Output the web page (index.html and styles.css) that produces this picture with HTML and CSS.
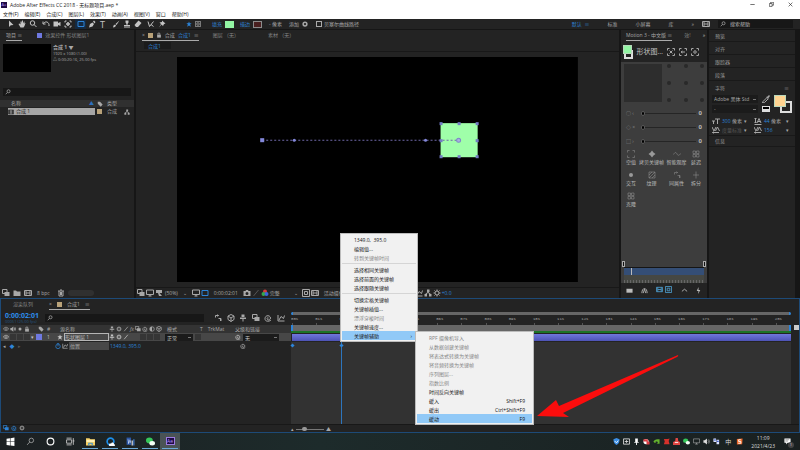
FILE: index.html
```html
<!DOCTYPE html>
<html lang="zh-CN">
<head>
  <meta charset="UTF-8" />
  <meta name="viewport" content="width=device-width, initial-scale=1.0"/>
  <title>Adobe After Effects CC 2018 - 无标题项目.aep *</title>
  <link rel="stylesheet" href="styles.css">
</head>
<body>
<svg class="sprite" aria-hidden="true">
  <symbol id="select" viewBox="0 0 16 16"><path class="f" d="M4 1v13l3.500-3.500L13 10z"/></symbol>
  <symbol id="hand" viewBox="0 0 16 16"><path class="f" d="M5 15L1 8l2-1 2 2V3h2v4l1-6h2v6l2-4h1v5l1-2h1l-2 6-2 3z"/></symbol>
  <symbol id="search" viewBox="0 0 16 16"><circle cx="9.500" cy="6" r="4"/><path d="M6.500 9L2 14"/></symbol>
  <symbol id="zoom" viewBox="0 0 16 16"><circle cx="7" cy="6" r="4.500"/><path d="M10 9l5 5"/></symbol>
  <symbol id="rotate" viewBox="0 0 16 16"><path d="M2 3v5h5M3 7c4-6 12-3 11 5"/></symbol>
  <symbol id="camera" viewBox="0 0 16 16"><path class="f" d="M1 3h9v3l5-2v8l-5-2v3H1z"/></symbol>
  <symbol id="anchor" viewBox="0 0 16 16"><path d="M2 5V2h3M11 2h3v3M14 11v3h-3M5 14H2v-3M8 4v8M4 8h8"/><circle cx="8" cy="8" r="2.500"/></symbol>
  <symbol id="rect" viewBox="0 0 16 16"><path d="M2 3h12v10H2z"/></symbol>
  <symbol id="pen" viewBox="0 0 16 16"><path class="f" d="M2 15l2-7 5-3 3 3-3 5zM10 3l2-2 3 3-2 3z"/></symbol>
  <symbol id="brush" viewBox="0 0 16 16"><path class="f" d="M15 1L7 8l2 2zM6 9l-3 2-1 4 4-1 2-3z"/></symbol>
  <symbol id="stamp" viewBox="0 0 16 16"><path class="f" d="M5 1h6v4L9 8v2h5v3H2v-3h5V8L5 5zM2 14h12v1H2z"/></symbol>
  <symbol id="eraser" viewBox="0 0 16 16"><path class="f" d="M9 1l6 5-7 8H4l-3-4z"/></symbol>
  <symbol id="roto" viewBox="0 0 16 16"><path d="M2 3l3 10 8-10M8 9l5 4"/></symbol>
  <symbol id="pin" viewBox="0 0 16 16"><path class="f" d="M8 1l7 6-3 1-2 4-3-3-5 6 4-7-3-3 5-1z"/></symbol>
  <symbol id="star" viewBox="0 0 16 16"><path class="f" d="M8 1l2 5h5l-4 3 2 6-5-3-5 3 2-6-4-3h5z"/></symbol>
  <symbol id="mask" viewBox="0 0 16 16"><path d="M1 1h14v14H1zM5 5h6v6H5z"/></symbol>
  <symbol id="lock" viewBox="0 0 16 16"><path class="f" d="M3 7h10v8H3z"/><path d="M5 7V3h5v4"/></symbol>
  <symbol id="tag" viewBox="0 0 16 16"><path class="f" d="M2 2h6l7 7-5 6-8-8z"/></symbol>
  <symbol id="tree" viewBox="0 0 16 16"><path class="f" d="M6 1h5v5H6zM1 10h5v5H1zM10 10h5v5h-5z"/><path d="M8 5v3M3 10l5-3 5 3"/></symbol>
  <symbol id="comp" viewBox="0 0 16 16"><path d="M1 3h14v10H1zM4 3v10M12 3v10M4 8h8"/></symbol>
  <symbol id="folder" viewBox="0 0 16 16"><path class="f" d="M1 3h5l2 2h7v9H1z"/></symbol>
  <symbol id="trash" viewBox="0 0 16 16"><path d="M2 4h12M6 2h4M4 4v10h8V4M7 6v6M9 6v6"/></symbol>
  <symbol id="monitor" viewBox="0 0 16 16"><path d="M1 2h14v9H1zM8 11v3M5 14h6"/></symbol>
  <symbol id="layers" viewBox="0 0 16 16"><path d="M1 1h9v8H1z"/><path class="f" d="M5 6h10v8H5z"/></symbol>
  <symbol id="goggles" viewBox="0 0 16 16"><path class="f" d="M2 2h12v6H9l5 6H8L6 8H2z"/></symbol>
  <symbol id="photo" viewBox="0 0 16 16"><path class="f" fill-rule="evenodd" d="M1 4h4l1-2h4l1 2h4v10H1zM8 6a3 3 0 100 6 3 3 0 000-6"/></symbol>
  <symbol id="eye" viewBox="0 0 16 16"><path d="M1 8c4-6 10-6 14 0-4 5-10 5-14 0z"/><circle class="f" cx="8" cy="8" r="2"/></symbol>
  <symbol id="speaker" viewBox="0 0 16 16"><path class="f" d="M1 5h3l5-4v14l-5-4H1z"/><path d="M11 5q3 3 0 6M13 3q4 5 0 10"/></symbol>
  <symbol id="dot" viewBox="0 0 16 16"><circle class="f" cx="8" cy="8" r="4"/></symbol>
  <symbol id="ring" viewBox="0 0 16 16"><circle cx="8" cy="8" r="5" stroke-width="4"/></symbol>
  <symbol id="gear" viewBox="0 0 16 16"><circle cx="8" cy="8" r="4"/><path d="M8 1v3M8 12v3M1 8h3M12 8h3M3 3l2 2M11 11l2 2M13 3l-2 2M5 11l-2 2"/></symbol>
  <symbol id="spiral" viewBox="0 0 16 16"><path d="M9 8c-2-2-4 1-2 3s6 0 6-3-4-6-8-4-4 9 0 10 7 0 9-2"/></symbol>
  <symbol id="slash" viewBox="0 0 16 16"><path d="M3 14L13 2"/></symbol>
  <symbol id="cube" viewBox="0 0 16 16"><path d="M8 1l6 3v7l-6 4-6-4V4zM2 4l6 4 6-4M8 8v7"/></symbol>
  <symbol id="blend" viewBox="0 0 16 16"><circle cx="8" cy="8" r="6"/><path class="f" d="M8 2a6 6 0 000 12z"/></symbol>
  <symbol id="shy" viewBox="0 0 16 16"><path class="f" d="M2 7h12v3H9v5H7v-5H2zM5 1h6v5H5z"/></symbol>
  <symbol id="graph" viewBox="0 0 16 16"><path d="M2 2v12h13M4 12l4-7 5 4 2-6"/></symbol>
  <symbol id="watch" viewBox="0 0 16 16"><circle cx="8" cy="9" r="6"/><path d="M8 9V5M5 1h6"/></symbol>
  <symbol id="drop" viewBox="0 0 16 16"><path d="M10 5l-8 8-1 3 4-1 7-7"/><path class="f" d="M8 4l3-1 3-3 2 2-3 4v3z"/></symbol>
  <symbol id="frame" viewBox="0 0 16 16"><path d="M1 5V1h4M11 1h4v4M15 11v4h-4M5 15H1v-4"/></symbol>
  <symbol id="frame-x" viewBox="0 0 16 16"><path d="M1 5V1h4M11 1h4v4M15 11v4h-4M5 15H1v-4M5 5l6 6M11 5l-6 6"/></symbol>
  <symbol id="frame-l" viewBox="0 0 16 16"><path d="M1 5V1h4M11 1h4v4M15 11v4h-4M5 15H1v-4M12 8H4M7 6L4 8l3 2"/></symbol>
  <symbol id="frame-o" viewBox="0 0 16 16"><path d="M1 5V1h4M11 1h4v4M15 11v4h-4M5 15H1v-4"/><circle cx="8" cy="8" r="2.500"/></symbol>
  <symbol id="clover" viewBox="0 0 16 16"><path class="f" d="M8 1l3 4 4 3-4 3-3 4-3-4-4-3 4-3z"/></symbol>
  <symbol id="wave" viewBox="0 0 16 16"><path d="M1 9c4-7 6-3 7-1s4 5 7-1"/></symbol>
  <symbol id="four" viewBox="0 0 16 16"><path d="M2 2h5v5H2zM9 2h5v5H9zM2 9h5v5H2zM9 9h5v5H9z"/></symbol>
  <symbol id="arrows" viewBox="0 0 16 16"><path d="M3 7V3h6M7 1l2 2-2 2M13 9v5M9 9h5v5"/></symbol>
  <symbol id="plus" viewBox="0 0 16 16"><path d="M8 1v14M2 8h12"/></symbol>
  <symbol id="hatch" viewBox="0 0 16 16"><path d="M2 2h12v12H2zM2 8l6-6M2 14L14 2M8 14l6-6"/></symbol>
  <symbol id="up" viewBox="0 0 16 16"><path d="M2 10l6-5 6 5"/></symbol>
  <symbol id="arch" viewBox="0 0 16 16"><path d="M2 14C2 0 14 0 14 14M5 14l3-9 3 9"/></symbol>
  <symbol id="bolt" viewBox="0 0 16 16"><path class="f" d="M8 0L4 9h4l-1 7 5-9H8z"/></symbol>
  <symbol id="bag" viewBox="0 0 16 16"><path class="f" d="M1 4h14v9H1z"/></symbol>
  <symbol id="tall" viewBox="0 0 16 16"><path class="f" d="M6 3h10v2h-4v9h-2V5H6zM0 7h6v2H4v5H2V9H0z"/></symbol>
  <symbol id="lead" viewBox="0 0 16 16"><path d="M1 15h14M3 2v10M1 4l2-2 2 2M1 10l2 2 2-2M6 12l4-9 4 9M8 9h5"/></symbol>
  <symbol id="kern" viewBox="0 0 16 16"><path d="M0 2l4 8 4-8M7 10l4-8 4 8M1 13h13M3 11l-2 2 2 2"/></symbol>
  <symbol id="minimize" viewBox="0 0 16 16"><path d="M1 8h14"/></symbol>
  <symbol id="restore" viewBox="0 0 16 16"><path d="M1 5h9v9H1zM5 5V1h10v9h-5"/></symbol>
  <symbol id="close" viewBox="0 0 16 16"><path d="M2 2l12 12M14 2L2 14"/></symbol>
</svg>

<header class="titlebar">
  <div class="title"><span class="ae-logo">Ae</span><h1>Adobe After Effects CC 2018 - 无标题项目.aep *</h1></div>
  <div class="window-buttons">
    <button aria-label="最小化"><svg class="icon"><use href="#minimize"/></svg></button>
    <button aria-label="还原"><svg class="icon"><use href="#restore"/></svg></button>
    <button aria-label="关闭"><svg class="icon"><use href="#close"/></svg></button>
  </div>
</header>
<nav class="menubar">
  <button>文件(F)</button><button>编辑(E)</button><button>合成(C)</button><button>图层(L)</button><button>效果(T)</button><button>动画(A)</button><button>视图(V)</button><button>窗口</button><button>帮助(H)</button>
</nav>

<div class="toolbar">
  <div class="tools">
    <button aria-label="选取"><svg class="icon"><use href="#select"/></svg></button>
    <button aria-label="手形"><svg class="icon"><use href="#hand"/></svg></button>
    <button aria-label="缩放"><svg class="icon"><use href="#zoom"/></svg></button>
  </div>
  <div class="tools">
    <button aria-label="旋转"><svg class="icon"><use href="#rotate"/></svg></button>
    <button aria-label="摄像机"><svg class="icon"><use href="#camera"/></svg></button>
    <button aria-label="锚点"><svg class="icon"><use href="#anchor"/></svg></button>
  </div>
  <div class="tools">
    <button class="on" aria-label="矩形"><svg class="icon"><use href="#rect"/></svg></button>
    <button aria-label="钢笔"><svg class="icon"><use href="#pen"/></svg></button>
    <button class="type-tool">T</button>
  </div>
  <div class="tools">
    <button aria-label="画笔"><svg class="icon"><use href="#brush"/></svg></button>
    <button aria-label="仿制图章"><svg class="icon"><use href="#stamp"/></svg></button>
    <button aria-label="橡皮擦"><svg class="icon"><use href="#eraser"/></svg></button>
  </div>
  <div class="tools">
    <button aria-label="Roto 笔刷"><svg class="icon"><use href="#roto"/></svg></button>
    <button aria-label="操控点"><svg class="icon"><use href="#pin"/></svg></button>
  </div>
  <div class="shape-options">
    <svg class="icon small blue"><use href="#star"/></svg>
    <svg class="icon small"><use href="#mask"/></svg>
    <a class="blue fill-label" href="#">填充</a><button class="swatch green" aria-label="填充颜色"></button>
    <a class="blue stroke-label" href="#">描边</a><button class="swatch red" aria-label="描边颜色"></button>
    <span class="px">- 像素</span><span class="add">添加</span><svg class="icon small"><use href="#ring"/></svg>
    <label class="bezier"><input type="checkbox">贝塞尔曲线路径</label>
  </div>
  <div class="workspaces">
    <button class="blue">默认 &nbsp;≡</button><button>标准</button><button>小屏幕</button><button>库</button><button>»</button>
    <svg class="icon"><use href="#comp"/></svg>
    <label class="search help"><svg class="icon small"><use href="#search"/></svg><input type="text" placeholder="搜索帮助" aria-label="搜索帮助"></label>
  </div>
</div>

<main class="workspace">
  <section class="panel project">
    <div class="tabs"><button class="tab active">项目 ≡</button><button class="tab"><i class="chip violet"></i>效果控件 形状图层1</button></div>
    <div class="summary">
      <div class="thumb"></div>
      <div><b>合成 1 ▼</b><p>1920 x 1080 (1.00)</p><p>△ 0:00:20:16, 25.00 fps</p></div>
    </div>
    <label class="search"><svg class="icon small"><use href="#search"/></svg><input type="text" aria-label="搜索项目"></label>
    <table class="files">
      <tr><th>名称<span class="sort">▲</span></th><th><svg class="icon small"><use href="#tag"/></svg></th><th>类型</th><th></th></tr>
      <tr><td class="picked"><svg class="icon small"><use href="#comp"/></svg>合成 1</td><td><i class="chip tan"></i></td><td>合成</td><td><svg class="icon small"><use href="#tree"/></svg></td></tr>
    </table>
    <div class="panel-foot project-foot">
      <svg class="icon"><use href="#layers"/></svg><svg class="icon"><use href="#folder"/></svg><svg class="icon"><use href="#comp"/></svg>
      <span>8 bpc</span><svg class="icon"><use href="#trash"/></svg><i class="pill"></i>
    </div>
  </section>

  <section class="panel viewer">
    <div class="tabs">
      <button class="tab active"><span>×</span><i class="chip tan"></i><svg class="icon small"><use href="#lock"/></svg>合成 <span class="blue">合成1</span> ≡</button>
      <button class="tab">图层 （无）</button><button class="tab">素材 （无）</button>
    </div>
    <div class="crumbs"><a class="blue" href="#">合成1</a></div>
    <div class="stage">
      <svg class="canvas" viewBox="0 0 400 225">
        <rect width="400" height="225" fill="#000"/>
        <rect x="263" y="66" width="37" height="34" fill="#9fffa9"/>
        <path class="motion-path" d="M85 83H281"/>
        <g fill="#8388da">
          <rect x="83" y="81" width="4" height="4"/>
          <circle cx="117" cy="83" r="1.500"/><circle cx="248" cy="83" r="1.500"/>
        </g>
        <g fill="#727bc4">
          <rect x="262" y="65" width="3" height="3"/><rect x="280" y="65" width="3" height="3"/><rect x="298" y="65" width="3" height="3"/>
          <rect x="262" y="82" width="3" height="3"/><rect x="298" y="82" width="3" height="3"/>
          <rect x="262" y="98" width="3" height="3"/><rect x="280" y="98" width="3" height="3"/><rect x="298" y="98" width="3" height="3"/>
        </g>
        <circle cx="281" cy="83" r="2" fill="#aab1df" stroke="#7f86c8"/>
      </svg>
    </div>
    <div class="panel-foot viewer-foot">
      <svg class="icon"><use href="#layers"/></svg><svg class="icon"><use href="#monitor"/></svg><svg class="icon"><use href="#goggles"/></svg>
      <button class="zoom-level">(50%)<span>⌄</span></button>
      <svg class="icon"><use href="#monitor"/></svg><svg class="icon blue"><use href="#rect"/></svg>
      <span class="frame-time">0:00:02:01</span>
      <svg class="icon"><use href="#photo"/></svg><svg class="icon dim"><use href="#slash"/></svg>
      <svg class="icon" viewBox="0 0 16 16"><circle cx="8" cy="5" r="4" fill="#d23c3c" stroke="none"/><circle cx="5" cy="10" r="4" fill="#36a84a" stroke="none"/><circle cx="11" cy="10" r="4" fill="#3c66d8" stroke="none"/></svg>
      <button class="quality">完整<span>⌄</span></button>
      <svg class="icon"><use href="#mask"/></svg><svg class="icon"><use href="#comp"/></svg>
      <button class="view">活动摄像机</button><button class="views">1个视图</button>
      <svg class="icon"><use href="#graph"/></svg><svg class="icon"><use href="#tree"/></svg><svg class="icon"><use href="#gear"/></svg><span class="blue">+0.0</span>
    </div>
  </section>

  <section class="panel motion">
    <div class="tabs"><button class="tab active">Motion 3 - 中文版 ≡</button><button class="tab">效!</button><button class="tab more">»</button></div>
    <div class="motion-head">
      <span class="swatches"><i class="front green"></i><i class="back"></i></span>
      <h2>形状图…</h2>
      <svg class="icon"><use href="#frame-x"/></svg><svg class="icon"><use href="#frame-l"/></svg><svg class="icon"><use href="#frame-o"/></svg>
    </div>
    <div class="motion-body">
      <div class="anchor">
        <div class="pad"></div>
        <div class="dots"><i></i><i></i><i></i><i></i><i></i><i></i><i></i><i></i><i></i></div>
      </div>
      <label class="ease"><span>○ ‹</span><input type="range" min="0" max="100" value="0"><output>0</output></label>
      <label class="ease"><span>◇ ×</span><input type="range" min="0" max="100" value="0"><output>0</output></label>
      <label class="ease"><span>□ ›</span><input type="range" min="0" max="100" value="0"><output>0</output></label>
      <div class="actions">
        <button><svg class="icon"><use href="#frame"/></svg>空值</button>
        <button><svg class="icon"><use href="#clover"/></svg>拷贝关键帧</button>
        <button><svg class="icon"><use href="#wave"/></svg>智能观摩</button>
        <button><svg class="icon"><use href="#four"/></svg>延迟</button>
        <button><svg class="icon"><use href="#dot"/></svg>交互</button>
        <button><svg class="icon"><use href="#hatch"/></svg>纹理</button>
        <button><svg class="icon"><use href="#arrows"/></svg>同属性</button>
        <button><svg class="icon"><use href="#plus"/></svg>拆分</button>
        <button><svg class="icon"><use href="#four"/></svg>克隆</button>
      </div>
      <div class="handles"><i></i><i></i></div>
      <div class="track"><i class="bar"></i><i class="teeth"></i></div>
    </div>
    <div class="motion-foot">
      <svg class="icon"><use href="#bag"/></svg><svg class="icon"><use href="#arch"/></svg>
      <span><svg class="icon on"><use href="#comp"/></svg><svg class="icon on"><use href="#mask"/></svg></span>
      <svg class="icon"><use href="#up"/></svg><svg class="icon"><use href="#bolt"/></svg>
    </div>
  </section>

  <aside class="panel side">
    <button class="fold">预览</button>
    <button class="fold">对齐</button>
    <button class="fold">跟踪器</button>
    <button class="fold">段落</button>
    <button class="fold open">字符<span>≡</span></button>
    <div class="character">
      <div class="font-row">
        <div class="font-selects">
          <select aria-label="字体"><option>Adobe 黑体 Std</option></select>
          <select aria-label="字形"><option>-</option></select>
        </div>
        <div class="droppers"><svg class="icon"><use href="#drop"/></svg><i class="bw"></i></div>
        <span class="swatches big"><i class="front peach"></i><i class="back"></i></span>
      </div>
      <div class="metrics">
        <svg class="icon"><use href="#tall"/></svg><span><span class="blue">300</span> 像素</span><span>▾</span>
        <svg class="icon"><use href="#lead"/></svg><span><span class="blue">44</span> 像素</span><span>▾</span>
        <svg class="icon"><use href="#kern"/></svg><span class="dim">度量标准</span><span>▾</span>
        <svg class="icon"><use href="#kern"/></svg><span class="blue">156</span><span>▾</span>
      </div>
    </div>
    <button class="fold last">信息</button>
  </aside>
</main>

<section class="timeline">
  <div class="tabs">
    <button class="tab queue">渲染队列</button>
    <button class="tab active"><span>×</span><i class="chip tan"></i>合成1 <span>≡</span></button>
  </div>
  <div class="timeline-main">
    <div class="layers">
      <div class="time-row">
        <div class="timecode"><strong>0:00:02:01</strong><small>00051 (25.00 fps)</small></div>
        <label class="search"><svg class="icon small"><use href="#search"/></svg><input type="text" aria-label="搜索图层"></label>
        <div class="comp-switches">
          <svg class="icon"><use href="#arrows"/></svg><svg class="icon"><use href="#cube"/></svg><svg class="icon"><use href="#shy"/></svg>
          <svg class="icon"><use href="#layers"/></svg><svg class="icon"><use href="#spiral"/></svg><svg class="icon"><use href="#graph"/></svg>
        </div>
      </div>
      <div class="layer-grid head">
        <div><svg class="icon small"><use href="#eye"/></svg><svg class="icon small"><use href="#speaker"/></svg><svg class="icon small"><use href="#dot"/></svg><svg class="icon small"><use href="#lock"/></svg></div>
        <div class="end"><svg class="icon small"><use href="#tag"/></svg></div><div class="mid">#</div><div class="source">源名称</div>
        <div class="switches"><svg class="icon small"><use href="#shy"/></svg><svg class="icon small"><use href="#gear"/></svg><svg class="icon small"><use href="#slash"/></svg><em>fx</em><svg class="icon small"><use href="#layers"/></svg><svg class="icon small"><use href="#spiral"/></svg><svg class="icon small"><use href="#blend"/></svg><svg class="icon small"><use href="#cube"/></svg></div>
        <div class="mode">模式</div><div class="matte"><span>T</span>TrkMat</div><div>父级和链接</div>
      </div>
      <div class="layer-grid layer">
        <div><svg class="icon small"><use href="#eye"/></svg><i class="slot"></i><i class="slot"></i><i class="slot"></i></div>
        <div class="twirl">▾<i class="chip violet"></i></div><div class="mid">1</div>
        <div class="name"><svg class="icon small"><use href="#star"/></svg><span class="name-box">形状图层 1</span></div>
        <div class="switches"><svg class="icon small"><use href="#shy"/></svg><svg class="icon small"><use href="#gear"/></svg><svg class="icon small"><use href="#slash"/></svg><span class="slots"><i class="slot"></i><i class="slot"></i><i class="slot"></i></span></div>
        <div><select aria-label="模式"><option>正常</option></select></div>
        <div><i class="slot"></i></div>
        <div><svg class="icon small"><use href="#spiral"/></svg><select class="parent" aria-label="父级"><option>无</option></select></div>
      </div>
      <div class="layer-grid property">
        <div class="keys"><span>◂</span><span class="blue">◆</span><span class="dim">▸</span></div>
        <div></div><div></div>
        <div class="name"><svg class="icon small blue"><use href="#watch"/></svg><svg class="icon small"><use href="#graph"/></svg><span class="prop">位置</span></div>
        <div class="blue value">1349.0, 395.0</div><div></div><div></div>
        <div class="whip"><svg class="icon small"><use href="#spiral"/></svg></div>
      </div>
    </div>
    <div class="tracks">
      <div class="navigator"></div>
      <div class="ruler" id="ruler"></div>
      <div class="work-area"></div>
      <div class="cached"></div>
      <div class="clip"></div>
      <div class="lanes"><i class="playhead"></i><i class="key first"></i><i class="key second"></i></div>
    </div>
    <div class="scroll"><i></i></div>
  </div>
  <div class="timeline-foot">
    <div class="toggles"><svg class="icon small blue"><use href="#layers"/></svg><svg class="icon small blue"><use href="#spiral"/></svg><svg class="icon small"><use href="#gear"/></svg></div>
    <div class="scale"><span>▴</span><input type="range" min="0" max="100" value="28" aria-label="时间缩放"><span>▲</span></div>
  </div>
</section>

<footer class="taskbar">
  <div class="apps">
    <button aria-label="开始"><svg viewBox="0 0 16 16"><path fill="#fff" d="M1 3l6-1v6H1zM8 2l7-1v7H8zM1 9h6v6l-6-1zM8 9h7v7l-7-1z"/></svg></button>
    <button aria-label="搜索"><svg class="line"><use href="#search"/></svg></button>
    <button aria-label="Cortana"><svg viewBox="0 0 16 16"><circle cx="8" cy="8" r="6" fill="none" stroke="#fff" stroke-width="2"/></svg></button>
    <button aria-label="任务视图"><svg viewBox="0 0 16 16"><path fill="none" stroke="#ccc" stroke-width="1.500" d="M1 5h9v6H1zM1 2h9M1 14h9M13 2v12M12 7h3"/></svg></button>
    <button class="run" aria-label="文件资源管理器"><svg viewBox="0 0 16 16"><path fill="#f6cf62" d="M0 2h6l2 2h8v11H0z"/><path fill="#fff0b8" d="M1 5h14v4H1z"/><path fill="#3b91d4" d="M4 10h8v5h-2v-3H6v3H4z"/></svg></button>
    <button class="run" aria-label="浏览器"><svg viewBox="0 0 16 16"><circle cx="8" cy="8" r="6" fill="none" stroke="#1d8ee8" stroke-width="3"/><path fill="#fff" d="M6 16c-2-3 1-5 3-4 1-4 6-2 5 1 3 0 2 3 1 3z"/></svg></button>
    <button class="run" aria-label="文档"><svg viewBox="0 0 16 16"><path fill="#2c57a6" d="M1 1h8v13H1z"/><path fill="#e7eefb" d="M3 4h1l1 6 2-6 2 6h-1L7 7l-2 5H4zM10 6h2v9h-2z"/><path fill="#4a84d8" d="M13 4h2v11h-2z"/></svg></button>
    <button class="run" aria-label="微信"><svg viewBox="0 0 16 16"><ellipse cx="6" cy="6" rx="6" ry="5" fill="#36c85a"/><ellipse cx="11" cy="11" rx="5" ry="4" fill="#f3fff5"/></svg></button>
    <button class="run current" aria-label="After Effects"><span class="ae-logo">Ae</span></button>
  </div>
  <div class="tray">
    <svg viewBox="0 0 16 16"><path fill="#3d8fe4" d="M8 0l7 3c0 7-2 10-7 13C3 13 1 10 1 3z"/><path fill="none" stroke="#fff" stroke-width="2" d="M4 7l4 4 4-5"/></svg>
    <svg class="line" viewBox="0 0 16 16"><path stroke-width="2" d="M1 2h14v12H1zM4 8h8M8 5v6"/></svg>
    <svg viewBox="0 0 16 16"><path fill="#fff" d="M5 1h6v8H5zM3 9h10v2H9v5H7v-5H3z"/></svg>
    <svg viewBox="0 0 16 16"><circle cx="7" cy="8" r="6" fill="#fff"/><path fill="#d93c42" d="M1 3h10v5H1zM8 8h7v7H8z"/></svg>
    <svg viewBox="0 0 16 16"><path fill="#65b32e" d="M1 8c3-5 8-5 14-5v10H8c5-1 3-6-1-5-2 0-2 3 0 3-3 1-5-1-6-3z"/></svg>
    <svg viewBox="0 0 16 16"><path fill="#d5312b" d="M2 2h9l4-1-2 6 2 7H2l2-6z"/></svg>
    <svg viewBox="0 0 16 16"><path fill="#e14743" d="M6 0h5l1 7 4 2v7H0V9l5-2z"/><path fill="#fff" d="M4 9h8v2H4z"/></svg>
    <svg viewBox="0 0 16 16"><ellipse cx="6" cy="6" rx="6" ry="5" fill="#36c85a"/><ellipse cx="11" cy="11" rx="5" ry="4" fill="#f3fff5"/></svg>
    <svg class="line"><use href="#monitor"/></svg>
    <svg class="line"><use href="#speaker"/></svg>
    <svg viewBox="0 0 16 16"><path fill="#dce4ff" d="M1 1h6v8H1zM8 4h6v10H8z"/><path fill="#405ccc" d="M3 3h3v3H3zM9 6h4v3H9z"/></svg>
    <span class="ime">中</span>
    <svg viewBox="0 0 16 16"><path fill="#ef6b2b" d="M2 2l13-1-1 13-12 1z"/><path fill="none" stroke="#fff" stroke-width="2" d="M11 4H6v4h5v4H5"/></svg>
    <div class="clock"><time>11:09</time><time>2021/4/23</time></div>
    <button class="notice" aria-label="通知"><svg viewBox="0 0 16 16"><path fill="#fff" d="M1 1h14v10H8l-3 4v-4H1z"/><path stroke="#333" d="M3 4h9M3 7h6"/></svg><sup>1</sup></button>
  </div>
</footer>

<div class="popup context">
  <button>1349.0,&nbsp; 395.0</button>
  <button>编辑值...</button>
  <button disabled>转到关键帧时间</button>
  <hr>
  <button>选择相同关键帧</button>
  <button>选择前面的关键帧</button>
  <button>选择跟随关键帧</button>
  <hr>
  <button>切换定格关键帧</button>
  <button>关键帧插值...</button>
  <button disabled>漂浮穿梭时间</button>
  <button>关键帧速度...</button>
  <button class="hot">关键帧辅助<kbd>›</kbd></button>
</div>
<div class="popup assistant">
  <button disabled>RPF 摄像机导入</button>
  <button disabled>从数据创建关键帧</button>
  <button disabled>将表达式转换为关键帧</button>
  <button disabled>将音频转换为关键帧</button>
  <button disabled>序列图层...</button>
  <button disabled>指数比例</button>
  <button>时间反向关键帧</button>
  <button>缓入<kbd>Shift+F9</kbd></button>
  <button>缓出<kbd>Ctrl+Shift+F9</kbd></button>
  <button class="hot">缓动<kbd>F9</kbd></button>
</div>
<svg class="pointer" viewBox="0 0 144 68"><path fill="#fb0d0d" d="M1 64L20 48l3 6L142 3q1 1-1 2L27 61l6 4z"/></svg>

<script>
  const ruler = document.getElementById('ruler');
  for (let s = 0; s <= 20; s++) {
    const mark = document.createElement('span');
    mark.textContent = String(s).padStart(2, '0') + 's';
    ruler.appendChild(mark);
  }
</script>
</body>
</html>
```
FILE: styles.css
```css
* {
  box-sizing: border-box;
}
body {
  margin: 0;
  min-height: 100vh;
  display: flex;
  flex-direction: column;
  position: relative;
  background: #161616;
  color: #a8a8a8;
  font-family: "Open Sans", "Noto Sans CJK SC", sans-serif;
  font-size: 5px;
  line-height: 8px;
  overflow: hidden;
}
h1, h2, p {
  margin: 0;
  font-weight: normal;
  font-size: inherit;
}
button, input, select {
  margin: 0;
  padding: 0;
  border: 0;
  background: none;
  color: inherit;
  font: inherit;
  white-space: nowrap;
}
a {
  text-decoration: none;
}
select {
  appearance: none;
}
input {
  min-width: 0;
}
.sprite {
  display: none;
}
.f {
  fill: currentColor;
  stroke: none;
}
.icon {
  width: 8px;
  height: 8px;
  flex: none;
  fill: none;
  stroke: currentColor;
  stroke-width: 2;
}
.icon.small {
  width: 6px;
  height: 6px;
}
.blue, .icon.blue {
  color: #2d84d8;
}
.dim {
  color: #555;
}
.chip {
  width: 5px;
  height: 5px;
  display: inline-block;
}
.violet {
  background: #6f79e0;
}
.tan {
  background: #b9a279;
}
.green {
  background: #93f5a4;
}
.peach {
  background: #ffd491;
}

/* title and menus */
.titlebar {
  height: 9px;
  display: flex;
  justify-content: space-between;
  background: #fff;
  color: #222;
}
.title {
  display: flex;
  align-items: center;
  gap: 3px;
  padding-left: 1px;
}
.ae-logo {
  width: 6px;
  height: 6px;
  background: #1f0a45;
  color: #b79aff;
  font-size: 4px;
  line-height: 6px;
  text-align: center;
}
.window-buttons {
  display: flex;
}
.window-buttons button {
  width: 19px;
}
.window-buttons .icon {
  width: 5px;
  height: 5px;
}
.menubar {
  height: 10px;
  display: flex;
  gap: 6px;
  padding-left: 3px;
  background: #fff;
  color: #222;
}

/* toolbar */
.toolbar {
  height: 10px;
  display: flex;
  align-items: center;
  margin-bottom: 1px;
  background: #232323;
}
.tools {
  display: flex;
  padding: 0 1px;
  color: #c4c4c4;
}
.tools:first-child {
  padding-left: 5px;
}
.tools button {
  width: 11px;
  height: 10px;
  line-height: 1px;
}
.tools .on {
  background: #142a42;
  color: #2d84d8;
}
.tools .type-tool {
  font-size: 9px;
  line-height: 9px;
}
.shape-options {
  display: flex;
  align-items: center;
  gap: 3px;
  margin-left: 18px;
}
.fill-label {
  margin-left: 8px;
}
.stroke-label {
  margin-left: 3px;
}
.swatch {
  width: 9px;
  height: 7px;
}
.swatch.red {
  border: 1px solid #8c8c8c;
  background: #4a2020;
}
.px {
  margin: 0 4px;
}
.bezier {
  display: flex;
  align-items: center;
  gap: 2px;
  margin-left: 5px;
}
.bezier input {
  appearance: none;
  width: 6px;
  height: 6px;
  border: 1px solid #aaa;
}
.workspaces {
  display: flex;
  align-items: center;
  gap: 18px;
  margin-left: auto;
  padding-right: 7px;
}
.workspaces > .icon {
  margin: 0 -10px;
}
.search {
  display: flex;
  align-items: center;
  height: 8px;
  background: #171717;
}
.search .icon {
  margin: 0 2px;
}
.search input {
  width: 100%;
}
.search.help {
  width: 75px;
}
.search.help input::placeholder {
  color: #bbb;
}
.search.help .icon {
  margin-right: 4px;
}

/* panels */
.workspace {
  flex: 1;
  display: grid;
  grid-template-columns: 134px 1fr 86px 86px;
  gap: 2px;
  padding-right: 5px;
}
.panel {
  display: flex;
  flex-direction: column;
  min-width: 0;
  background: #232323;
}
.tabs {
  height: 12px;
  display: flex;
  align-items: flex-start;
  gap: 12px;
  padding-left: 6px;
  flex: none;
}
.tab {
  height: 11px;
  display: flex;
  align-items: center;
  gap: 3px;
  border-bottom: 1px solid transparent;
  color: #858585;
}
.tab.active {
  border-color: #aaa;
  color: #a8a8a8;
}
.panel-foot {
  height: 10px;
  display: flex;
  align-items: center;
  margin-top: auto;
  padding: 0 4px;
}
.project .tabs {
  gap: 15px;
}
.summary {
  display: flex;
  gap: 2px;
  padding: 2px 3px;
  font-size: 4px;
  line-height: 6px;
}
.summary b {
  font-size: 5px;
}
.thumb {
  width: 48px;
  height: 28px;
  background: #000;
}
.project > .search {
  margin: 14px 3px 3px;
}
.files {
  width: 100%;
  border-spacing: 0 1px;
}
.files th, .files td {
  height: 7px;
  padding: 0;
  line-height: 7px;
  font-weight: normal;
  text-align: left;
  vertical-align: middle;
}
.files th {
  background: #303030;
}
.files .icon, .files .chip {
  display: inline-block;
  vertical-align: middle;
}
.files th:first-child {
  width: 97px;
  padding-left: 11px;
}
.files .sort {
  float: right;
  margin-right: 3px;
  color: #2d6fbd;
}
.files .picked {
  padding-left: 8px;
  background: linear-gradient(90deg, #232323 8px, #a6a6a6 8px 95px, #232323 95px);
  color: #222;
}
.files .picked .icon {
  margin-right: 2px;
}
.project-foot {
  gap: 3px;
  padding-left: 2px;
}
.project-foot span {
  margin: 0 4px 0 2px;
}
.pill {
  width: 26px;
  height: 6px;
  border-radius: 3px;
  background: #303030;
}

/* viewer */
.viewer .tabs {
  gap: 14px;
}
.viewer .tab:nth-child(2) {
  margin-right: 15px;
}
.crumbs {
  height: 10px;
  padding-left: 8px;
  border-bottom: 1px solid #181818;
}
.crumbs a {
  display: inline-block;
  width: 27px;
  height: 7px;
  padding-left: 4px;
  background: #1b1b1b;
}
.stage {
  flex: 1;
  display: flex;
  justify-content: center;
  align-items: center;
  border-bottom: 1px solid #181818;
}
.canvas {
  display: block;
  width: 83%;
}
.motion-path {
  fill: none;
  stroke: #6f68a8;
  stroke-dasharray: 2 2;
}
.viewer-foot {
  gap: 1px;
  padding-left: 1px;
}
.zoom-level {
  margin-left: 1px;
}
.zoom-level span {
  margin: 0 4px 0 5px;
}
.frame-time {
  margin: 0 4px;
}
.quality span {
  margin: 0 3px 0 14px;
}
.view, .views {
  margin-left: 4px;
}
.views {
  margin-right: 42px;
}

/* Motion 3 */
.motion .tabs {
  padding-left: 5px;
}
.motion .more {
  margin: 0 2px 0 auto;
  color: #c0c0c0;
}
.motion-head {
  height: 20px;
  display: flex;
  align-items: center;
  gap: 4px;
  padding: 0 8px 0 2px;
}
.motion-head h2 {
  flex: 1;
  font-size: 7px;
  line-height: 10px;
  color: #c0c0c0;
  white-space: nowrap;
}
.swatches {
  position: relative;
  width: 14px;
  height: 14px;
}
.swatches i {
  position: absolute;
  width: 9px;
  height: 9px;
}
.swatches .front {
  top: 0;
  left: 0;
  z-index: 1;
  border: 1px solid #b8d8bc;
}
.swatches .back {
  right: 0;
  bottom: 0;
  border: 2px solid #ddd;
}
.swatches.big {
  width: 18px;
  height: 18px;
}
.swatches.big i {
  width: 12px;
  height: 12px;
}
.motion-body {
  flex: 1;
  display: flex;
  flex-direction: column;
  padding: 2px 3px 0;
  background: #3d3d3d;
}
.anchor {
  display: flex;
  gap: 5px;
}
.pad {
  width: 38px;
  height: 38px;
  background: #2d2d2d;
}
.dots {
  flex: 1;
  display: grid;
  grid-template-columns: repeat(3, 4px);
  justify-content: space-between;
  align-content: space-between;
}
.dots i {
  width: 4px;
  height: 4px;
  border-radius: 2px;
  background: #292929;
}
.ease {
  height: 14px;
  display: flex;
  align-items: center;
  gap: 3px;
  padding: 0 2px;
}
.anchor + .ease {
  margin-top: 4px;
}
.ease span {
  width: 12px;
  color: #888;
}
.ease input {
  appearance: none;
  flex: 1;
  height: 1px;
  background: #252525;
}
.ease input::-webkit-slider-thumb {
  appearance: none;
  width: 4px;
  height: 5px;
  border: 1px solid #5a5a5a;
  border-radius: 2px;
  background: #000;
}
.ease output {
  font-size: 6px;
  font-weight: bold;
  color: #bbb;
}
.actions {
  display: grid;
  grid-template-columns: 14px 27px 1fr 16px;
  row-gap: 5px;
  margin-top: 2px;
}
.actions button {
  display: flex;
  flex-direction: column;
  align-items: center;
}
.actions .icon {
  stroke-width: 1;
  color: #999;
}
.actions button, .motion-foot {
  color: #bcbcbc;
}
.handles {
  display: flex;
  justify-content: space-between;
  margin: auto -2px 0;
}
.handles i {
  width: 3px;
  height: 6px;
  border: 1px solid #aaa;
  background: #111;
}
.track {
  display: flex;
  flex-direction: column;
  border-top: 1px solid #151515;
}
.bar {
  height: 7px;
  background: linear-gradient(90deg, #344e76 7px, #bbb 7px 8px, #344e76 8px);
}
.teeth {
  height: 8px;
  background: repeating-linear-gradient(90deg, #666 0 1px, #454743 1px 3px);
  border-top: 5px solid #454743;
}
.motion-foot {
  height: 15px;
  display: flex;
  align-items: center;
  justify-content: space-between;
  padding: 0 5px;
}
.motion-foot .icon {
  width: 7px;
  height: 7px;
}
.motion-foot .on {
  margin: 0 1px;
  color: #4d9ccc;
}

/* collapsed panels */
.fold {
  height: 12px;
  display: flex;
  justify-content: space-between;
  align-items: center;
  margin-bottom: 1px;
  padding: 0 6px;
  border-bottom: 1px solid #191919;
  color: #999;
}
.fold.open {
  height: 11px;
  border: 0;
}
.fold.last {
  border-top: 1px solid #191919;
}
.character {
  padding: 1px 3px;
}
.font-row {
  display: flex;
  gap: 4px;
}
.font-selects {
  display: grid;
  gap: 2px;
  flex: 1;
}
.font-selects select, .layer select {
  background: #1b1b1b linear-gradient(#777, #777) no-repeat right 2px center / 3px 1px;
}
.font-selects select {
  height: 8px;
  padding-left: 2px;
}
.droppers {
  display: grid;
  gap: 2px;
}
.bw {
  width: 8px;
  height: 6px;
  border: 1px solid #ddd;
  background: linear-gradient(#000 50%, #ddd 50%);
}
.metrics {
  display: grid;
  grid-template-columns: 9px 1fr 9px 9px 1fr 6px;
  row-gap: 1px;
  column-gap: 1px;
  margin-top: 4px;
}
.metrics > span {
  white-space: nowrap;
}

/* timeline */
.timeline {
  height: 135px;
  display: flex;
  flex-direction: column;
  border: 1px solid #1d4a77;
  background: #232323;
}
.timeline > .tabs {
  padding-left: 12px;
}
.timeline > .tabs .queue {
  margin-right: 4px;
}
.timeline > .tabs .active {
  gap: 5px;
}
.timeline-main {
  flex: 1;
  display: grid;
  grid-template-columns: 290px 1fr 8px;
}
.layers {
  display: flex;
  flex-direction: column;
}
.time-row {
  height: 14px;
  display: flex;
  align-items: center;
  gap: 4px;
  padding-left: 4px;
}
.timecode {
  width: 36px;
}
.timecode strong {
  display: block;
  color: #2d8ce8;
  font-size: 7px;
  line-height: 8px;
}
.timecode small {
  display: block;
  color: #24537e;
  font-size: 4px;
  line-height: 4px;
}
.time-row .search {
  width: 159px;
}
.comp-switches {
  flex: 1;
  display: flex;
  justify-content: space-between;
  padding: 0 6px;
}
.layer-grid {
  height: 8px;
  display: grid;
  grid-template-columns: 30px 13px 9px 56px 54px 32px 40px 1fr;
}
.layer-grid > div {
  display: flex;
  align-items: center;
  min-width: 0;
  white-space: nowrap;
}
.layer-grid > div:first-child {
  padding-left: 2px;
  gap: 1px;
}
.layer-grid .mid {
  justify-content: center;
}
.layer-grid .end {
  justify-content: flex-end;
}
.layer-grid .switches {
  gap: 1px;
}
.head {
  background: #333;
}
.head .source {
  padding-left: 7px;
}
.head .mode {
  padding-left: 4px;
}
.matte span {
  margin: 0 5px;
}
.layer {
  background: #474747;
  color: #c4c4c4;
}
.slot {
  width: 6px;
  height: 6px;
  background: #353535;
}
.slots {
  display: flex;
  gap: 1px;
  margin-left: 10px;
}
.twirl {
  gap: 2px;
}
.twirl .chip {
  width: 6px;
  height: 6px;
}
.name {
  gap: 1px;
  padding-left: 4px;
}
.name-box {
  flex: 1;
  height: 8px;
  padding-left: 1px;
  outline: 1px solid #b5b5b5;
  outline-offset: -1px;
}
.layer select {
  width: 28px;
  height: 7px;
  margin-left: 2px;
  padding-left: 2px;
}
.layer .parent {
  width: 36px;
}
.property {
  height: 9px;
}
.keys {
  justify-content: space-between;
  padding-right: 10px;
}
.property .name {
  padding-left: 2px;
}
.prop {
  flex: 1;
  height: 8px;
  padding-left: 1px;
  background: #484848;
}
.property .value {
  padding-left: 1px;
}
.whip {
  padding-left: 5px;
}
.tracks {
  display: flex;
  flex-direction: column;
  background: #232323;
}
.navigator {
  height: 3px;
  margin: 1px 0;
  border: solid #2d84d8;
  border-width: 0 2px;
  border-radius: 2px;
  background: #666;
}
.ruler {
  height: 9px;
  display: flex;
  overflow: hidden;
  font-family: "Liberation Mono", monospace;
  font-size: 4px;
  line-height: 6px;
  color: #aaa;
}
.ruler span {
  flex: 0 0 4.84%;
  height: 9px;
  background: linear-gradient(#555, #555) no-repeat 1px bottom / 1px 2px;
}
.work-area {
  height: 6px;
  border: solid #2d84d8;
  border-width: 0 2px;
  background: #666;
}
.cached {
  height: 2px;
  background: #1c7427;
}
.clip {
  height: 7px;
  margin: 1px 0 1px 1px;
  background: linear-gradient(#7077dd, #4d53b5);
}
.lanes {
  flex: 1;
  position: relative;
  background: #323232;
}
.playhead {
  position: absolute;
  left: 10%;
  top: -10px;
  bottom: 0;
  width: 1px;
  background: #2d75bd;
}
.key {
  position: absolute;
  top: 2px;
  width: 3px;
  height: 3px;
  background: #2d84d8;
  transform: rotate(45deg);
}
.key.first {
  left: 0;
}
.key.second {
  left: calc(10% - 1px);
}
.scroll {
  padding: 14px 0 0 3px;
}
.scroll i {
  display: block;
  width: 5px;
  height: 5px;
  background: #ccc;
}
.timeline-foot {
  height: 8px;
  display: grid;
  grid-template-columns: 290px 1fr;
  border-top: 1px solid #181818;
}
.toggles {
  display: flex;
  gap: 2px;
  padding-left: 2px;
}
.scale {
  display: flex;
  align-items: center;
  gap: 2px;
}
.scale input {
  appearance: none;
  width: 28px;
  height: 1px;
  background: #777;
}
.scale input::-webkit-slider-thumb {
  appearance: none;
  width: 5px;
  height: 4px;
  border-radius: 2px;
  background: #999;
}

/* taskbar */
.taskbar {
  height: 17px;
  display: flex;
  justify-content: space-between;
  background: linear-gradient(90deg, #1c2022, #1d2b2b 40%, #1a2020);
}
.apps, .tray {
  display: flex;
  align-items: center;
}
.apps button {
  width: 20px;
  height: 17px;
  display: flex;
  justify-content: center;
  align-items: center;
  border-bottom: 1px solid transparent;
}
.apps svg {
  width: 9px;
  height: 9px;
}
.apps .run {
  background: linear-gradient(#6ba8d6, #6ba8d6) no-repeat center bottom / 16px 1px;
}
.apps .current {
  background-color: #4a5355;
}
.apps .ae-logo {
  width: 9px;
  height: 8px;
  border: 1px solid #9c7be0;
  font-size: 5px;
}
.line {
  fill: none;
  stroke: #ddd;
  stroke-width: 1;
}
.tray {
  gap: 3px;
  padding-right: 9px;
  color: #ddd;
}
.tray svg {
  width: 7px;
  height: 7px;
}
.ime {
  margin: 0 2px;
  font-size: 6px;
}
.clock {
  display: flex;
  flex-direction: column;
  align-items: center;
  margin: 0 6px 0 5px;
}
.notice {
  position: relative;
  display: flex;
}
.notice sup {
  position: absolute;
  right: -3px;
  bottom: -3px;
  width: 6px;
  height: 6px;
  border-radius: 3px;
  background: #444;
  font-size: 4px;
  line-height: 6px;
}

/* popup menus */
.popup {
  position: absolute;
  display: flex;
  flex-direction: column;
  padding: 1px;
  border: 1px solid #bcbcbc;
  background: #f1f1f1;
  color: #111;
}
.popup button {
  height: 9px;
  display: flex;
  justify-content: space-between;
  align-items: center;
  padding: 0 7px 0 12px;
}
.popup button:disabled {
  color: #858585;
}
.popup .hot {
  background: #91c9f7;
}
.popup kbd {
  font: inherit;
}
.popup hr {
  width: 100%;
  margin: 1px 0;
  border: 0;
  border-top: 1px solid #d5d5d5;
}
.context {
  left: 340px;
  top: 233px;
  width: 78px;
}
.context button {
  padding-right: 4px;
}
.assistant {
  left: 415px;
  top: 331px;
  width: 119px;
}
.pointer {
  position: absolute;
  left: 536px;
  top: 352px;
  width: 144px;
}
```
